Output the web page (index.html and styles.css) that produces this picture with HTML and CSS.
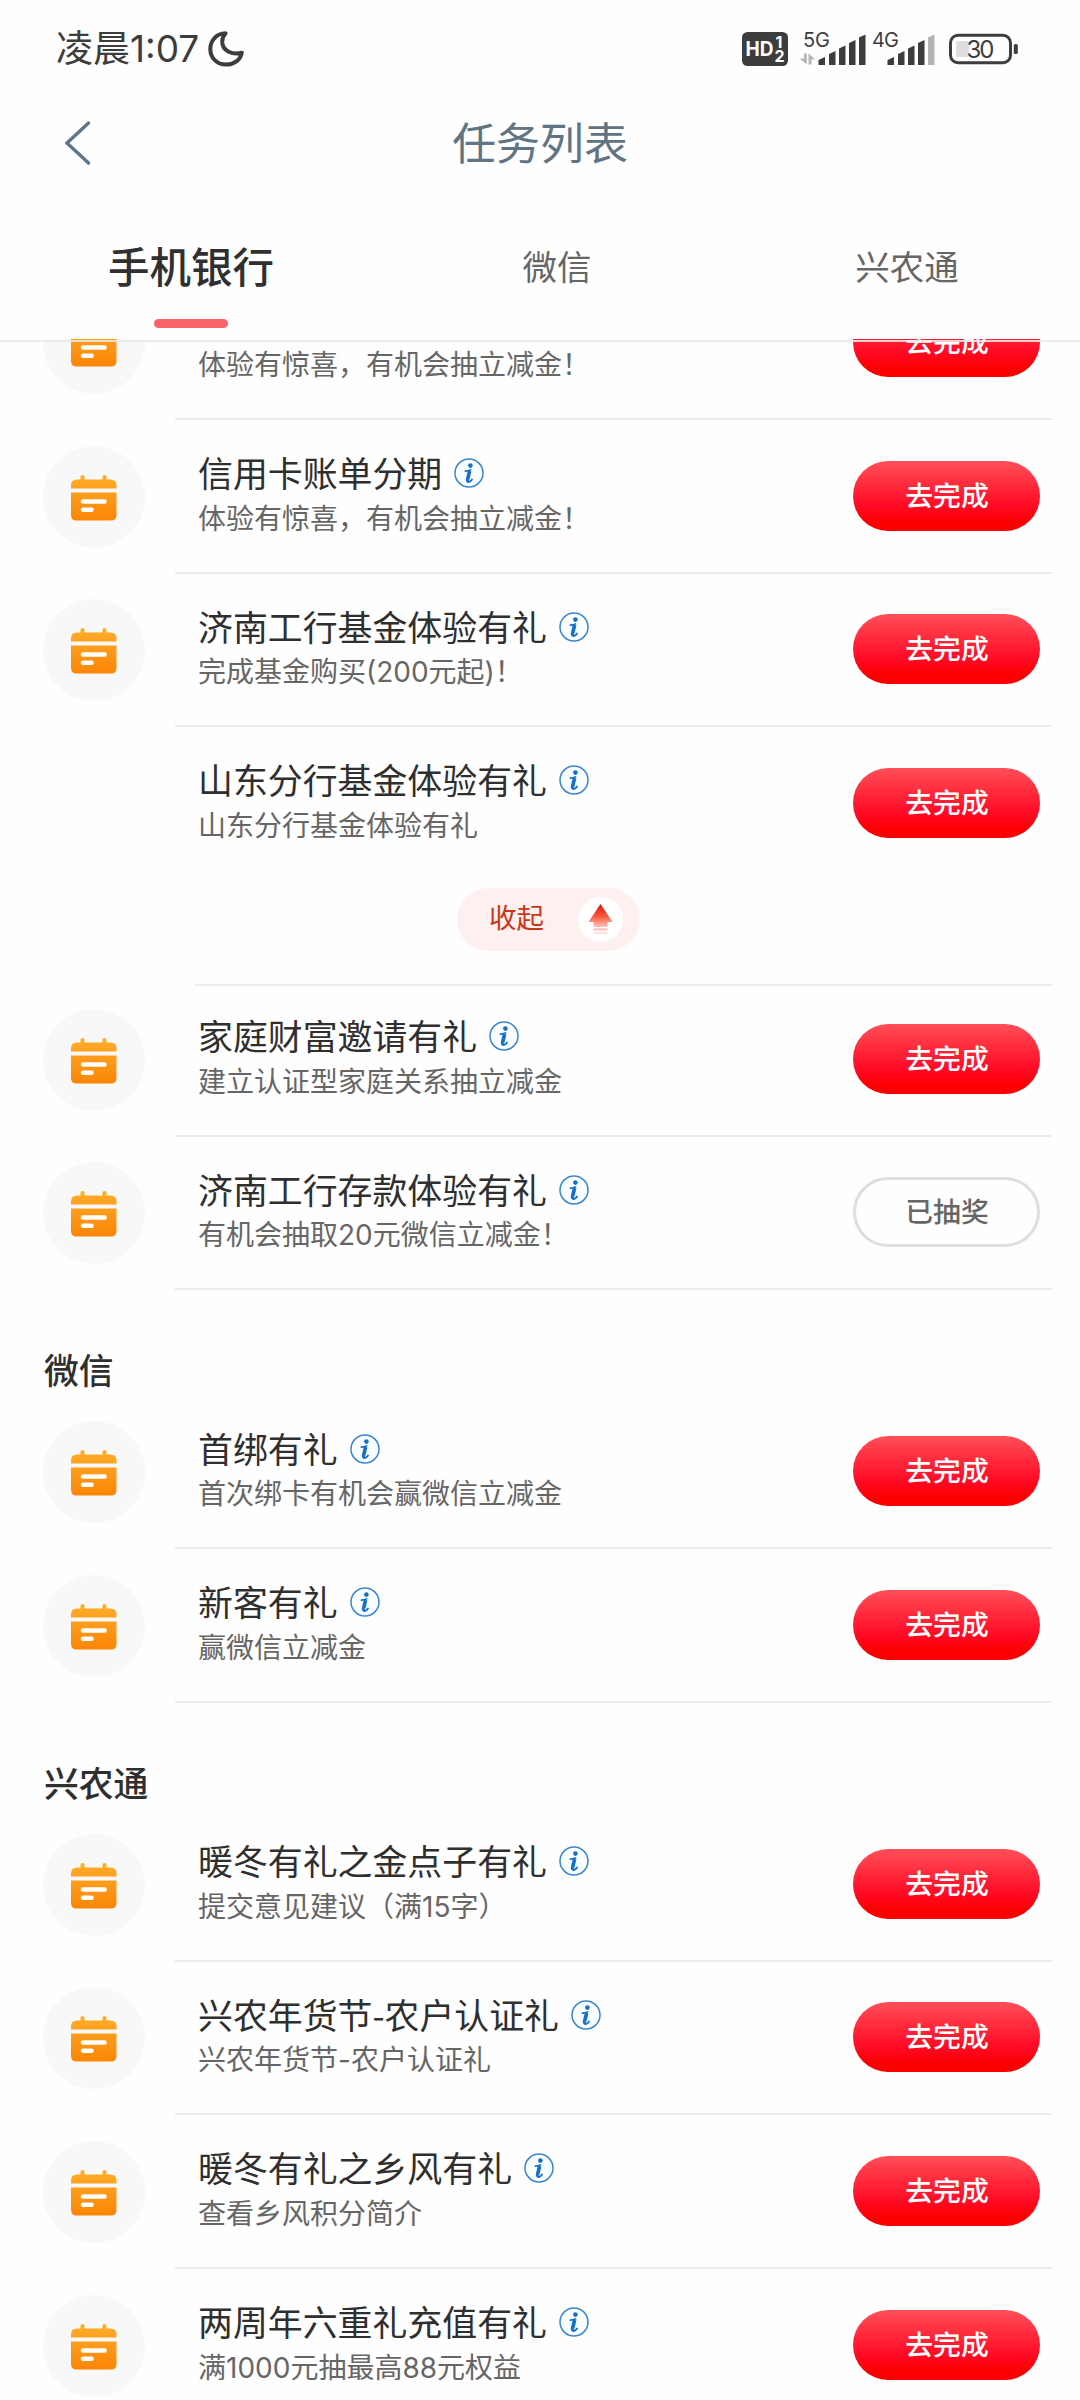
FILE: index.html
```html
<!DOCTYPE html>
<html lang="zh-CN">
<head>
<meta charset="utf-8">
<title>任务列表</title>
<link rel="stylesheet" href="styles.css">
</head>
<body>
<svg class="defs" aria-hidden="true">
  <defs>
    <linearGradient id="orange" x1="0" y1="0" x2="0" y2="46" gradientUnits="userSpaceOnUse">
      <stop offset="0" stop-color="#ffad2b"/><stop offset="1" stop-color="#fb8505"/>
    </linearGradient>
    <symbol id="calendar" viewBox="0 0 46 46">
      <path fill="url(#orange)" d="M0 13.500V10.500Q0 4.500 6 4.500H9.500V2Q9.500 0 11.500 0Q13.500 0 13.500 2V4.500H31.500V2Q31.500 0 33.500 0Q35.500 0 35.500 2V4.500H39.500Q45.500 4.500 45.500 10.500V13.500Z"/>
      <path fill="url(#orange)" d="M0 17.500H45.500V40Q45.500 45.500 40 45.500H5.500Q0 45.500 0 40Z"/>
      <path fill="none" stroke="#fff" stroke-width="4.600" stroke-linecap="round" d="M12 26.500H33.500M12 34.700H20.500"/>
    </symbol>
    <symbol id="info" viewBox="0 0 30 30">
      <circle cx="15" cy="15" r="14" fill="#fafdff" stroke="#3b86cf" stroke-width="1.500"/>
      <circle cx="16.400" cy="7.600" r="2.300" fill="#1470c6"/>
      <path fill="none" stroke="#1470c6" stroke-width="3.600" stroke-linejoin="round" d="M15.600 13L13.600 21.500Q13.400 23.400 15 23"/>
      <path fill="none" stroke="#1470c6" stroke-width="1.800" stroke-linecap="round" d="M11.500 13.200Q13.500 12.800 16.500 12M14.500 24Q16.800 23.600 18 21.500"/>
    </symbol>
  </defs>
</svg>

<div class="screen">
  <header class="header">
    <div class="status">
      <div class="clock">
        <span>凌晨1:07</span>
        <svg class="moon" viewBox="0 0 36 36"><path d="M17.500 2.300C8.500 2.500 2.300 9.500 2.300 18C2.300 27 9 33.600 18 33.600C26 33.600 32.500 29 33.800 21.700C25 24.500 14 20 14.200 10.500C14.300 7 15.500 4.500 17.500 2.300Z"/></svg>
      </div>
      <svg class="indicators" viewBox="740 20 280 58">
        <rect x="742" y="32" width="46" height="34" rx="5.500" fill="#3d3d3d"/>
        <text class="hd" x="745.500" y="56" textLength="28" lengthAdjust="spacingAndGlyphs">HD</text>
        <text class="sim" x="775.500" y="47.500">1</text>
        <text class="sim" x="774.500" y="62">2</text>
        <text class="net" x="803" y="47" textLength="27">5G</text>
        <text class="net" x="872" y="47" textLength="27">4G</text>
        <path fill="#b5b5b5" d="M804 53.500H806.800V64.500L799.500 58.500H804ZM808.500 64.500V53.500L815.500 59.500H811.500V64.500Z"/>
        <path fill="#3d3d3d" d="M818.500 65V60L825 57V65ZM829 65V54L835.500 51V65ZM839 65V48.500L845.500 45.500V65ZM849 65V43L855.500 40V65ZM859 65V37.500L865.500 34.500V65Z"/>
        <path fill="#3d3d3d" d="M887.500 65V60L894 57V65ZM898 65V54L904.500 51V65ZM908 65V48.500L914.500 45.500V65ZM918 65V43L924.500 40V65Z"/>
        <path fill="#b5b5b5" d="M928 65V37.500L934.500 34.500V65Z"/>
        <rect x="956" y="41" width="13" height="16" rx="2" fill="#dedede"/>
        <rect x="950.500" y="35.300" width="60" height="27.400" rx="7.500" fill="none" stroke="#3d3d3d" stroke-width="3"/>
        <rect x="1013.800" y="44" width="4" height="10" rx="1.500" fill="#3d3d3d"/>
        <text class="charge" x="966.500" y="58" textLength="28">30</text>
      </svg>
    </div>
    <div class="nav">
      <svg class="back" viewBox="0 0 26 44"><path d="M23.500 2L2 22L23.500 42"/></svg>
      <h1>任务列表</h1>
    </div>
    <nav class="tabs">
      <span class="tab active">手机银行</span>
      <span class="tab">微信</span>
      <span class="tab">兴农通</span>
    </nav>
  </header>

  <main class="list">
    <article class="row first">
      <div class="badge"><svg><use href="#calendar"/></svg></div>
      <div class="body"><div class="info"><h3></h3><p>体验有惊喜，有机会抽立减金！</p></div><span class="btn">去完成</span></div>
    </article>
    <article class="row">
      <div class="badge"><svg><use href="#calendar"/></svg></div>
      <div class="body"><div class="info"><h3>信用卡账单分期<svg><use href="#info"/></svg></h3><p>体验有惊喜，有机会抽立减金！</p></div><span class="btn">去完成</span></div>
    </article>
    <article class="row">
      <div class="badge"><svg><use href="#calendar"/></svg></div>
      <div class="body"><div class="info"><h3>济南工行基金体验有礼<svg><use href="#info"/></svg></h3><p>完成基金购买(200元起)！</p></div><span class="btn">去完成</span></div>
    </article>
    <article class="row open">
      <div class="body"><div class="info"><h3>山东分行基金体验有礼<svg><use href="#info"/></svg></h3><p>山东分行基金体验有礼</p></div><span class="btn">去完成</span></div>
    </article>
    <div class="collapse">
      <span class="collapse-btn"><span class="collapse-label">收起</span>
        <svg viewBox="0 0 45 45">
          <defs><linearGradient id="up" x1="0" y1="0" x2="0" y2="1"><stop offset="0" stop-color="#e01008"/><stop offset=".55" stop-color="#fa5a40"/><stop offset="1" stop-color="#fdc5bb"/></linearGradient></defs>
          <circle cx="22.500" cy="22.500" r="22.500" fill="#fff"/>
          <path fill="url(#up)" d="M22.500 7L34.500 25H29.500V30H15.500V25H10.500Z"/>
          <path fill="#fdc0b8" d="M15.500 31.300H29.500V33.500H15.500Z"/><path fill="#fee0dc" d="M15.500 35H29.500V37H15.500Z"/>
        </svg>
      </span>
    </div>
    <article class="row">
      <div class="badge"><svg><use href="#calendar"/></svg></div>
      <div class="body"><div class="info"><h3>家庭财富邀请有礼<svg><use href="#info"/></svg></h3><p>建立认证型家庭关系抽立减金</p></div><span class="btn">去完成</span></div>
    </article>
    <article class="row">
      <div class="badge"><svg><use href="#calendar"/></svg></div>
      <div class="body"><div class="info"><h3>济南工行存款体验有礼<svg><use href="#info"/></svg></h3><p>有机会抽取20元微信立减金！</p></div><span class="btn done">已抽奖</span></div>
    </article>

    <h2>微信</h2>
    <article class="row">
      <div class="badge"><svg><use href="#calendar"/></svg></div>
      <div class="body"><div class="info"><h3>首绑有礼<svg><use href="#info"/></svg></h3><p>首次绑卡有机会赢微信立减金</p></div><span class="btn">去完成</span></div>
    </article>
    <article class="row">
      <div class="badge"><svg><use href="#calendar"/></svg></div>
      <div class="body"><div class="info"><h3>新客有礼<svg><use href="#info"/></svg></h3><p>赢微信立减金</p></div><span class="btn">去完成</span></div>
    </article>

    <h2>兴农通</h2>
    <article class="row">
      <div class="badge"><svg><use href="#calendar"/></svg></div>
      <div class="body"><div class="info"><h3>暖冬有礼之金点子有礼<svg><use href="#info"/></svg></h3><p>提交意见建议（满15字）</p></div><span class="btn">去完成</span></div>
    </article>
    <article class="row">
      <div class="badge"><svg><use href="#calendar"/></svg></div>
      <div class="body"><div class="info"><h3>兴农年货节-农户认证礼<svg><use href="#info"/></svg></h3><p>兴农年货节-农户认证礼</p></div><span class="btn">去完成</span></div>
    </article>
    <article class="row">
      <div class="badge"><svg><use href="#calendar"/></svg></div>
      <div class="body"><div class="info"><h3>暖冬有礼之乡风有礼<svg><use href="#info"/></svg></h3><p>查看乡风积分简介</p></div><span class="btn">去完成</span></div>
    </article>
    <article class="row">
      <div class="badge"><svg><use href="#calendar"/></svg></div>
      <div class="body"><div class="info"><h3>两周年六重礼充值有礼<svg><use href="#info"/></svg></h3><p>满1000元抽最高88元权益</p></div><span class="btn">去完成</span></div>
    </article>
  </main>
</div>
</body>
</html>
```
FILE: styles.css
```css
* { box-sizing: border-box; margin: 0; padding: 0; }

body {
  width: 1080px;
  height: 2400px;
  overflow: hidden;
  background: #fefefe;
  color: #2f2f2f;
  font-family: "Noto Sans CJK SC", sans-serif;
  font-weight: 400;
}

.defs { position: absolute; width: 0; height: 0; }

.screen {
  height: 2400px;
  display: flex;
  flex-direction: column;
  overflow: hidden;
}

/* Header */
.header {
  position: relative;
  flex: none;
  height: 339px;
}
.header::after {
  content: "";
  position: absolute;
  z-index: 1;
  left: 0;
  right: 0;
  top: 340px;
  height: 2px;
  background: rgba(233, 233, 233, .88);
}

.status {
  height: 98px;
  padding: 0 60px 0 56px;
  display: flex;
  align-items: center;
  justify-content: space-between;
}
.clock {
  display: flex;
  align-items: center;
  gap: 9px;
  color: #3d3d3d;
  font: 400 37px/50px Inter, "Noto Sans CJK SC", sans-serif;
}
.moon { width: 36px; height: 36px; fill: none; stroke: #3d3d3d; stroke-width: 4; stroke-linejoin: round; }
.indicators { width: 280px; height: 58px; }
.indicators text { font-family: Inter, sans-serif; fill: #3d3d3d; }
.indicators .hd { font-size: 20px; font-weight: 700; fill: #fff; }
.indicators .sim { font-size: 16px; font-weight: 700; fill: #fff; }
.indicators .net { font-size: 20px; }
.indicators .charge { font-size: 24px; }

.nav {
  height: 88px;
  padding: 0 65px;
  display: grid;
  grid-template-columns: 26px 1fr 26px;
  align-items: center;
}
.back { width: 26px; height: 44px; margin-top: 2px; fill: none; stroke: #5f7688; stroke-width: 3.400; stroke-linecap: round; }
h1 {
  margin-top: -3px;
  text-align: center;
  color: #607484;
  font-size: 43.900px;
  font-weight: 400;
  line-height: 60px;
}

.tabs {
  height: 153px;
  display: grid;
  grid-template-columns: 382px 350px 350px;
  align-items: start;
  justify-items: center;
  padding-top: 49px;
}
.tab { color: #666; font-size: 34.500px; line-height: 60px; }
.tab.active {
  display: flex;
  flex-direction: column;
  align-items: center;
  color: #303030;
  font-size: 41.500px;
  font-weight: 500;
}
.tab.active::after {
  content: "";
  width: 74px;
  height: 9px;
  margin-top: 24px;
  border-radius: 5px;
  background: #fb636a;
}

/* Task list */
.list { flex: 1; min-height: 0; overflow: hidden; }

.row { height: 153.600px; display: flex; padding-right: 28px; }
.row.first { margin-top: -72.600px; }
.row.open { padding-left: 175px; }
.row.open .body { border-color: transparent; }

.badge { width: 175px; padding-left: 43px; display: flex; align-items: center; }
.badge::before {
  content: "";
  width: 102px;
  height: 102px;
  border-radius: 50%;
  background: #f8f8f8;
}
.badge svg { width: 46px; height: 46px; margin-left: -74px; margin-top: 2px; }

.body {
  flex: 1;
  display: flex;
  align-items: center;
  justify-content: space-between;
  padding: 0 12px 0 23px;
  border-bottom: 2px solid #ececec;
}
h3 {
  display: flex;
  align-items: center;
  gap: 12px;
  height: 46px;
  font-size: 34.900px;
  font-weight: 400;
  line-height: 42px;
  padding-bottom: 3px;
}
h3 svg { width: 30px; height: 30px; margin-top: 2px; }
.info p {
  color: #666;
  font: 400 28px/44px Inter, "Noto Sans CJK SC", sans-serif;
}

.btn {
  width: 187px;
  height: 70px;
  border-radius: 35px;
  background: linear-gradient(#ff4f59, #ff0822 66%, #fb0000 88%);
  color: #fff;
  font-size: 27.800px;
  font-weight: 500;
  line-height: 67px;
  text-align: center;
  padding-left: 1px;
}
.btn.done {
  border: 3px solid #dedede;
  background: #fefefe;
  color: #666;
  line-height: 61px;
}

.collapse {
  height: 105.200px;
  margin-bottom: -3px;
  margin-left: 195px;
  margin-right: 28px;
  border-bottom: 2px solid #ececec;
  padding: 7px 0 0 262px;
}
.collapse-btn {
  display: flex;
  align-items: center;
  justify-content: space-between;
  width: 183px;
  height: 63px;
  padding: 0 17px 0 32px;
  border-radius: 32px;
  background: #fff0f0;
  color: #cb3516;
  font-size: 27.500px;
  line-height: 40px;
}
.collapse-label { padding-bottom: 7px; }
.collapse-btn svg { width: 45px; height: 45px; }

h2 {
  height: 105.300px;
  padding: 54px 0 0 44px;
  font-size: 34.800px;
  font-weight: 500;
  line-height: 50px;
}
```
